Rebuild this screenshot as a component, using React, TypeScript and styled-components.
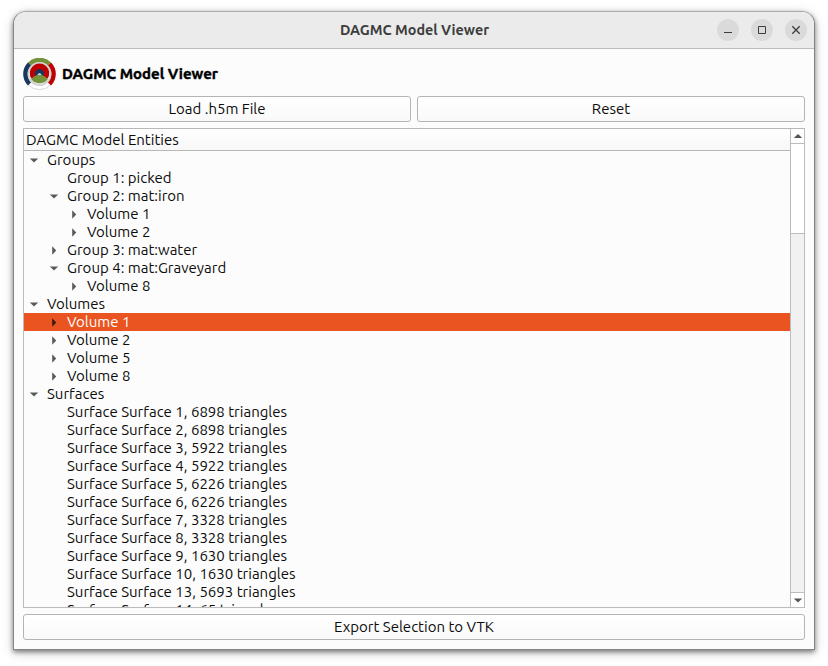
import React from 'react';
import styled, { createGlobalStyle } from 'styled-components';

const GlobalStyle = createGlobalStyle`
  body {
    margin: 0;
    background: #fff;
    overflow: hidden;
  }
  * {
    box-sizing: border-box;
  }
`;

const Desktop = styled.div`
  height: 666px;
  padding: 11px 13px 15px 13px;
  background: #fff;
  font-family: Ubuntu, 'Noto Sans', sans-serif;
  font-size: 15px;
  color: #0c0c0c;
`;

const Window = styled.div`
  display: flex;
  flex-direction: column;
  width: 802px;
  height: 639px;
  border: 1px solid #858585;
  border-top-color: #ababab;
  border-radius: 13px 13px 0 0;
  background: #fcfcfc;
  overflow: hidden;
  box-shadow: 0 2px 5px rgba(0, 0, 0, 0.48), 0 3px 13px rgba(0, 0, 0, 0.16);
`;

const TitleBar = styled.header`
  display: grid;
  grid-template-columns: 1fr auto 1fr;
  align-items: center;
  height: 37px;
  flex: none;
  border-bottom: 1px solid #bcbcbc;
  background: #ebebeb;
`;

const WindowTitle = styled.h1`
  grid-column: 2;
  margin: 0 0 1px 1px;
  font-size: 14.35px;
  font-weight: 700;
  line-height: 20px;
  color: #3d3d3d;
`;

const WindowControls = styled.div`
  display: flex;
  justify-content: flex-end;
  gap: 12px;
  padding-right: 7px;
`;

const ControlButton = styled.button`
  display: grid;
  place-items: center;
  width: 22px;
  height: 22px;
  padding: 0;
  border: 0;
  border-radius: 50%;
  background: #dadada;
`;

const Content = styled.main`
  display: flex;
  flex-direction: column;
  flex: 1;
  min-height: 0;
  padding: 9px 9px 9px;
`;

const Brand = styled.div`
  display: flex;
  align-items: center;
  gap: 6px;
  height: 32px;
  margin-bottom: 6px;
`;

const BrandName = styled.h2`
  margin: 0;
  font-size: 15px;
  font-weight: 700;
  line-height: 20px;
  color: #000;
  -webkit-text-stroke: 0.4px #000;
`;

const ButtonRow = styled.div`
  display: flex;
  gap: 6px;
  margin-bottom: 6px;
`;

const PushButton = styled.button`
  flex: 1;
  min-width: 0;
  height: 26px;
  padding: 0 0 1px;
  border: 1px solid #b4b4b4;
  border-radius: 3px;
  background: linear-gradient(#fff, #f9f9f9);
  font: inherit;
  line-height: 22px;
  color: inherit;
`;

const TreeFrame = styled.div`
  display: flex;
  height: 480px;
  margin-bottom: 6px;
  border: 1px solid #bcbcbc;
  border-top-color: #b8b8b8;
`;

const TreeView = styled.div`
  flex: 1;
  min-width: 0;
  overflow: hidden;
`;

const TreeHeader = styled.div`
  height: 22px;
  padding-left: 2px;
  border-bottom: 1px solid #b8b8b8;
  background: linear-gradient(#fff, #f7f7f7);
  line-height: 22px;
`;

const TreeRow = styled.div<{ $depth: number; $selected?: boolean }>`
  display: flex;
  align-items: center;
  height: 18px;
  padding-left: ${(p) => p.$depth * 20}px;
  background: ${(p) => (p.$selected ? '#e95420' : 'transparent')};
  color: ${(p) => (p.$selected ? '#fff' : 'inherit')};
  line-height: 18px;
  white-space: nowrap;
`;

const Expander = styled.span<{ $dark?: boolean }>`
  display: flex;
  align-items: center;
  width: 20px;
  height: 18px;
  margin-right: 3px;
  padding-left: 5px;
  color: ${(p) => (p.$dark ? '#3c1c10' : '#5a5a5a')};
`;

const ScrollBar = styled.div`
  display: flex;
  flex-direction: column;
  width: 14px;
  border-left: 1px solid #bcbcbc;
  background: #f1f1f1;
`;

const ScrollArrow = styled.div<{ $down?: boolean }>`
  display: grid;
  place-items: center;
  height: 15px;
  border: 0 solid #bcbcbc;
  border-width: ${(p) => (p.$down ? '1px 0 0' : '0 0 1px')};
  background: #fff;
  color: #555;
`;

const ScrollTrack = styled.div`
  flex: 1;
`;

const ScrollThumb = styled.div`
  height: 90px;
  border-bottom: 1px solid #bcbcbc;
  background: #fff;
`;

type State = 'open' | 'closed' | 'leaf';

interface Entity {
  label: string;
  depth: number;
  state: State;
  selected?: boolean;
}

const surfaces: [number, number][] = [
  [1, 6898], [2, 6898], [3, 5922], [4, 5922], [5, 6226], [6, 6226],
  [7, 3328], [8, 3328], [9, 1630], [10, 1630], [13, 5693], [14, 65],
];

const entities: Entity[] = [
  { label: 'Groups', depth: 0, state: 'open' },
  { label: 'Group 1: picked', depth: 1, state: 'leaf' },
  { label: 'Group 2: mat:iron', depth: 1, state: 'open' },
  { label: 'Volume 1', depth: 2, state: 'closed' },
  { label: 'Volume 2', depth: 2, state: 'closed' },
  { label: 'Group 3: mat:water', depth: 1, state: 'closed' },
  { label: 'Group 4: mat:Graveyard', depth: 1, state: 'open' },
  { label: 'Volume 8', depth: 2, state: 'closed' },
  { label: 'Volumes', depth: 0, state: 'open' },
  { label: 'Volume 1', depth: 1, state: 'closed', selected: true },
  { label: 'Volume 2', depth: 1, state: 'closed' },
  { label: 'Volume 5', depth: 1, state: 'closed' },
  { label: 'Volume 8', depth: 1, state: 'closed' },
  { label: 'Surfaces', depth: 0, state: 'open' },
  ...surfaces.map(([id, count]): Entity => ({
    label: `Surface Surface ${id}, ${count} triangles`,
    depth: 1,
    state: 'leaf',
  })),
];

const arrows = {
  down: 'M0.8 2.4H9.2L5 6.4Z',
  up: 'M0.8 6H9.2L5 2Z',
  right: 'M3.2 0.3V8.7L7.2 4.5Z',
};

const Arrow = ({ to }: { to: keyof typeof arrows }) => (
  <svg width="10" height="9" viewBox="0 0 10 9">
    <path d={arrows[to]} fill="currentColor" />
  </svg>
);

const Logo = () => (
  <svg width="33" height="32" viewBox="0 0 33 32">
    <circle cx="16.5" cy="16" r="15.6" fill="#fff" stroke="#c9c9c9" strokeWidth="0.7" />
    <g fill="none" strokeWidth="4.6">
      <path d="M6.6 6.1A14 14 0 0 1 26.4 6.1" stroke="#76933c" />
      <path d="M26.4 6.1A14 14 0 0 1 26.4 25.9" stroke="#c00000" />
      <path d="M6.6 25.9A14 14 0 0 1 6.6 6.1" stroke="#17375e" />
    </g>
    <circle cx="16.5" cy="16" r="11.2" fill="#e9e9e9" stroke="#d0d0d0" strokeWidth="1.6" />
    <path d="M16.5 16L8.6 20.8A9.7 9.7 0 1 1 24.4 20.8Z" fill="#c00000" />
    <path d="M16.5 16L8.4 21A9.8 9.8 0 0 0 24.6 21Q20.5 18 16.5 18Z" fill="#76933c" />
    <path d="M12.6 18.2A4.6 4.6 0 1 1 20.4 18.2L16.5 16.8Z" fill="#17375e" />
    <path d="M14.5 17.2A2 2 0 1 1 18.5 17.2Z" fill="#e3e9f2" />
    <path d="M8.4 21Q12.5 16.8 16.5 16.8T24.6 21L22 24H11Z" fill="#76933c" />
  </svg>
);

export default function App() {
  return (
    <>
      <GlobalStyle />
      <Desktop>
        <Window>
          <TitleBar>
            <span />
            <WindowTitle>DAGMC Model Viewer</WindowTitle>
            <WindowControls>
              <ControlButton aria-label="Minimize">
                <svg width="10" height="10" viewBox="0 0 10 10">
                  <path d="M1 7.5H9" stroke="#3d3d3d" />
                </svg>
              </ControlButton>
              <ControlButton aria-label="Maximize">
                <svg width="10" height="10" viewBox="0 0 10 10">
                  <path d="M1.5 1.5H8.5V8.5H1.5Z" fill="none" stroke="#3d3d3d" />
                </svg>
              </ControlButton>
              <ControlButton aria-label="Close">
                <svg width="10" height="10" viewBox="0 0 10 10">
                  <path d="M1.3 1.3L8.7 8.7M8.7 1.3L1.3 8.7" stroke="#3d3d3d" strokeWidth="1.3" />
                </svg>
              </ControlButton>
            </WindowControls>
          </TitleBar>
          <Content>
            <Brand>
              <Logo />
              <BrandName>DAGMC Model Viewer</BrandName>
            </Brand>
            <ButtonRow>
              <PushButton>Load .h5m File</PushButton>
              <PushButton>Reset</PushButton>
            </ButtonRow>
            <TreeFrame>
              <TreeView>
                <TreeHeader>DAGMC Model Entities</TreeHeader>
                {entities.map((e, i) => (
                  <TreeRow key={i} $depth={e.depth} $selected={e.selected}>
                    <Expander $dark={e.selected}>
                      {e.state !== 'leaf' && <Arrow to={e.state === 'open' ? 'down' : 'right'} />}
                    </Expander>
                    {e.label}
                  </TreeRow>
                ))}
              </TreeView>
              <ScrollBar>
                <ScrollArrow>
                  <Arrow to="up" />
                </ScrollArrow>
                <ScrollTrack>
                  <ScrollThumb />
                </ScrollTrack>
                <ScrollArrow $down>
                  <Arrow to="down" />
                </ScrollArrow>
              </ScrollBar>
            </TreeFrame>
            <ButtonRow>
              <PushButton>Export Selection to VTK</PushButton>
            </ButtonRow>
          </Content>
        </Window>
      </Desktop>
    </>
  );
}
